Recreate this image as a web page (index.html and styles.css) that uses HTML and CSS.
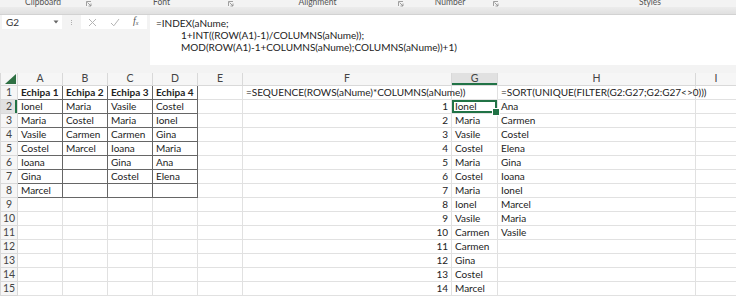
FILE: index.html
```html
<!DOCTYPE html>
<html lang="ro">
<head>
    <meta charset="UTF-8">
    <meta name="viewport" content="width=device-width, initial-scale=1.0">
    <title>Echipe - INDEX / SEQUENCE / SORT</title>
    <link rel="stylesheet" href="styles.css">
</head>
<body>
    <div class="ribbon">
        <div class="group g-clip"><span class="label">Clipboard</span><span class="launcher"><svg width="6" height="6" viewBox="0 0 6 6"><path d="M0.5 5V0.5H5M1.5 1.5L5 5M5 2.5V5H2.5" fill="none" stroke="#8a8a8a" stroke-width="0.8"/></svg></span></div>
        <div class="group g-font"><span class="label">Font</span><span class="launcher"><svg width="6" height="6" viewBox="0 0 6 6"><path d="M0.5 5V0.5H5M1.5 1.5L5 5M5 2.5V5H2.5" fill="none" stroke="#8a8a8a" stroke-width="0.8"/></svg></span></div>
        <div class="group g-align"><span class="label">Alignment</span><span class="launcher"><svg width="6" height="6" viewBox="0 0 6 6"><path d="M0.5 5V0.5H5M1.5 1.5L5 5M5 2.5V5H2.5" fill="none" stroke="#8a8a8a" stroke-width="0.8"/></svg></span></div>
        <div class="group g-num"><span class="label">Number</span><span class="launcher"><svg width="6" height="6" viewBox="0 0 6 6"><path d="M0.5 5V0.5H5M1.5 1.5L5 5M5 2.5V5H2.5" fill="none" stroke="#8a8a8a" stroke-width="0.8"/></svg></span></div>
        <div class="group g-styles"><span class="label">Styles</span></div>
    </div>
    <div class="ribbon-edge"></div>

    <div class="formula-bar">
        <div class="name-box">
            <span>G2</span>
            <svg class="drop" width="6" height="4" viewBox="0 0 6 4"><path d="M0.5 0.5H5.5L3 3.5Z" fill="#666"/></svg>
        </div>
        <div class="grip"><i></i><i></i><i></i></div>
        <div class="fx-buttons">
            <svg width="9" height="9" viewBox="0 0 9 9"><path d="M1 1L8 8M8 1L1 8" stroke="#b4b4b4" stroke-width="1"/></svg>
            <svg width="10" height="9" viewBox="0 0 10 9"><path d="M1 5L3.8 7.8L9 1" fill="none" stroke="#b4b4b4" stroke-width="1"/></svg>
            <span class="fx"><i>f</i><sub>x</sub></span>
        </div>
        <div class="formula">
            <div>=INDEX(aNume;</div>
            <div class="indent">1+INT((ROW(A1)-1)/COLUMNS(aNume));</div>
            <div class="indent">MOD(ROW(A1)-1+COLUMNS(aNume);COLUMNS(aNume))+1)</div>
        </div>
    </div>

    <table class="sheet">
        <colgroup>
            <col class="w-rh"><col class="w-n"><col class="w-n"><col class="w-n"><col class="w-n"><col class="w-n"><col class="w-f"><col class="w-g"><col class="w-h"><col class="w-i">
        </colgroup>
        <tr class="heads">
            <th class="corner"><svg width="11" height="10" viewBox="0 0 11 10"><path d="M11 0V10H0Z" fill="#2e7043"/></svg></th>
            <th>A</th><th>B</th><th>C</th><th>D</th><th>E</th><th>F</th><th class="hsel">G</th><th>H</th><th>I</th>
        </tr>
        <tr>
            <th>1</th>
            <td class="b bold">Echipa 1</td><td class="b bold">Echipa 2</td><td class="b bold">Echipa 3</td><td class="b bold">Echipa 4</td>
            <td></td><td>=SEQUENCE(ROWS(aNume)*COLUMNS(aNume))</td><td></td><td>=SORT(UNIQUE(FILTER(G2:G27;G2:G27&lt;&gt;0)))</td><td></td>
        </tr>
        <tr>
            <th class="rsel">2</th>
            <td class="b">Ionel</td><td class="b">Maria</td><td class="b">Vasile</td><td class="b">Costel</td>
            <td></td><td class="num">1</td><td class="sel">Ionel</td><td>Ana</td><td></td>
        </tr>
        <tr>
            <th>3</th>
            <td class="b">Maria</td><td class="b">Costel</td><td class="b">Maria</td><td class="b">Ionel</td>
            <td></td><td class="num">2</td><td>Maria</td><td>Carmen</td><td></td>
        </tr>
        <tr>
            <th>4</th>
            <td class="b">Vasile</td><td class="b">Carmen</td><td class="b">Carmen</td><td class="b">Gina</td>
            <td></td><td class="num">3</td><td>Vasile</td><td>Costel</td><td></td>
        </tr>
        <tr>
            <th>5</th>
            <td class="b">Costel</td><td class="b">Marcel</td><td class="b">Ioana</td><td class="b">Maria</td>
            <td></td><td class="num">4</td><td>Costel</td><td>Elena</td><td></td>
        </tr>
        <tr>
            <th>6</th>
            <td class="b">Ioana</td><td class="b"></td><td class="b">Gina</td><td class="b">Ana</td>
            <td></td><td class="num">5</td><td>Maria</td><td>Gina</td><td></td>
        </tr>
        <tr>
            <th>7</th>
            <td class="b">Gina</td><td class="b"></td><td class="b">Costel</td><td class="b">Elena</td>
            <td></td><td class="num">6</td><td>Costel</td><td>Ioana</td><td></td>
        </tr>
        <tr>
            <th>8</th>
            <td class="b">Marcel</td><td class="b"></td><td class="b"></td><td class="b"></td>
            <td></td><td class="num">7</td><td>Maria</td><td>Ionel</td><td></td>
        </tr>
        <tr>
            <th>9</th>
            <td></td><td></td><td></td><td></td>
            <td></td><td class="num">8</td><td>Ionel</td><td>Marcel</td><td></td>
        </tr>
        <tr>
            <th>10</th>
            <td></td><td></td><td></td><td></td>
            <td></td><td class="num">9</td><td>Vasile</td><td>Maria</td><td></td>
        </tr>
        <tr>
            <th>11</th>
            <td></td><td></td><td></td><td></td>
            <td></td><td class="num">10</td><td>Carmen</td><td>Vasile</td><td></td>
        </tr>
        <tr>
            <th>12</th>
            <td></td><td></td><td></td><td></td>
            <td></td><td class="num">11</td><td>Carmen</td><td></td><td></td>
        </tr>
        <tr>
            <th>13</th>
            <td></td><td></td><td></td><td></td>
            <td></td><td class="num">12</td><td>Gina</td><td></td><td></td>
        </tr>
        <tr>
            <th>14</th>
            <td></td><td></td><td></td><td></td>
            <td></td><td class="num">13</td><td>Costel</td><td></td><td></td>
        </tr>
        <tr>
            <th>15</th>
            <td></td><td></td><td></td><td></td>
            <td></td><td class="num">14</td><td>Marcel</td><td></td><td></td>
        </tr>
        <tr>
            <th>16</th>
            <td></td><td></td><td></td><td></td>
            <td></td><td class="num">15</td><td>Ioana</td><td></td><td></td>
        </tr>
    </table>
</body>
</html>
```

FILE: styles.css
```css
* {
    box-sizing: border-box;
}
body {
    margin: 0;
    width: 736px;
    height: 296px;
    overflow: hidden;
    background-color: #f3f3f3;
    font-family: Lato, "Liberation Sans", sans-serif;
    color: #222;
}

/* ribbon group labels, cut off at the top */
.ribbon {
    display: flex;
    height: 7px;
    overflow: hidden;
    font-size: 8.5px;
    color: #555;
}
.group {
    display: flex;
    flex-shrink: 0;
    align-items: flex-end;
}
.label {
    flex: 1;
    text-align: center;
    line-height: 10px;
}
.launcher {
    width: 6px;
    height: 6px;
    margin-right: 3px;
    display: flex;
}
.g-clip { width: 95px; }
.g-font { width: 142px; }
.g-align { width: 170px; }
.g-num { width: 95px; }
.g-styles { width: 296px; }

.ribbon-edge {
    height: 8px;
    background: linear-gradient(#ececec, #e0e0e0);
    border-bottom: 1px solid #d2d2d2;
}

/* formula bar */
.formula-bar {
    display: flex;
    height: 50px;
    font-size: 10px;
}
.name-box {
    width: 60px;
    height: 14px;
    margin-left: 2px;
    background-color: #fff;
    display: flex;
    align-items: center;
    justify-content: space-between;
    padding: 0 3px 0 4px;
    color: #333;
}
.grip {
    width: 19px;
    height: 14px;
    display: flex;
    flex-direction: column;
    align-items: center;
    justify-content: center;
    gap: 1px;
}
.grip i {
    width: 1px;
    height: 1px;
    background-color: #b0b0b0;
}
.fx-buttons {
    width: 66px;
    height: 14px;
    background-color: #fff;
    display: flex;
    align-items: center;
    gap: 13px;
    padding-left: 7px;
}
.fx {
    color: #555;
    font-family: "Liberation Serif", serif;
    font-size: 10px;
    line-height: 10px;
}
.fx sub {
    font-size: 6px;
    vertical-align: -1px;
    font-style: italic;
}
.formula {
    flex: 1;
    margin-left: 3px;
    background-color: #fff;
    padding: 2px 0 0 6px;
    line-height: 12px;
    color: #222;
}
.indent {
    padding-left: 25px;
}

/* sheet grid */
.sheet {
    margin-top: 8px;
    border-collapse: collapse;
    table-layout: fixed;
    width: 736px;
    background-color: #fff;
    font-size: 10px;
}
.w-rh { width: 17px; }
.w-n { width: 45px; }
.w-f { width: 209px; }
.w-g { width: 46px; }
.w-h { width: 198px; }
.w-i { width: 41px; }

.sheet td,
.sheet th {
    height: 14px;
    padding: 0 3px;
    line-height: 13px;
    white-space: nowrap;
    border: 1px solid #e1e1e1;
    text-align: left;
    font-weight: normal;
}
.sheet th {
    background-color: #f6f6f6;
    color: #444;
    text-align: center;
    padding: 0;
    border-color: #d9d9d9;
    font-size: 10.5px;
}
.heads th {
    height: 12px;
    line-height: 11px;
    border-top: none;
}
.sheet th.corner {
    text-align: right;
    vertical-align: bottom;
    padding: 0 1px 1px 0;
    line-height: 0;
}
.sheet th.hsel {
    background-color: #e1e1e1;
    box-shadow: inset 0 -2px 0 #217346;
}
.sheet th.rsel {
    background-color: #e1e1e1;
    box-shadow: inset -2px 0 0 #217346;
}
.sheet td.b {
    border: 1px solid #666;
}
.sheet td.bold {
    font-weight: bold;
}
.sheet td.num {
    text-align: right;
}
.sheet td.sel {
    position: relative;
    box-shadow: inset 0 0 0 2px #217346;
}
.sel::after {
    content: "";
    position: absolute;
    right: -3px;
    bottom: -3px;
    width: 6px;
    height: 6px;
    background-color: #217346;
    border: 1px solid #fff;
}
```
